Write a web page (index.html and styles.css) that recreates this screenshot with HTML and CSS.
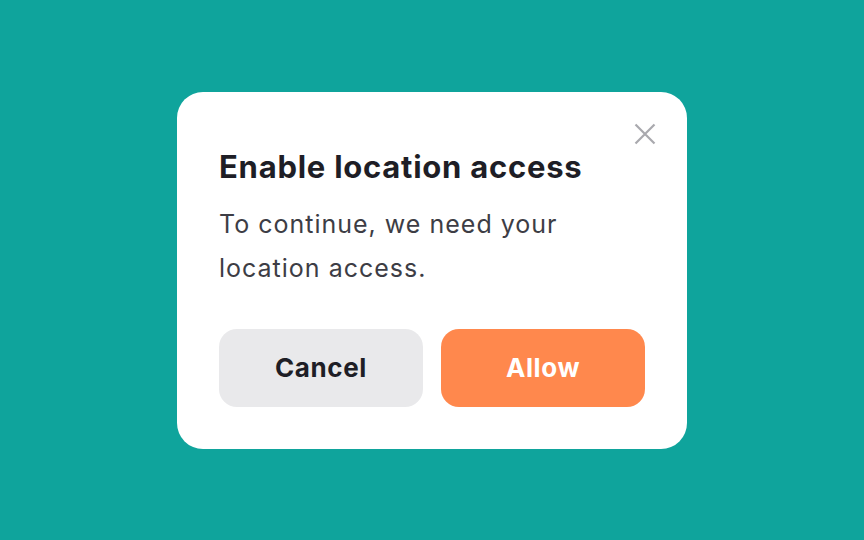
FILE: index.html
```html
<!DOCTYPE html>
<html lang="en">
<head>
  <meta charset="UTF-8">
  <meta name="viewport" content="width=device-width, initial-scale=1">
  <title>Enable location access</title>
  <link rel="stylesheet" href="styles.css">
</head>
<body>

  <div class="dialog">
    <button class="close" aria-label="Close">
      <svg width="22" height="22" viewBox="0 0 22 22">
        <path d="M1.5 1.5L20.5 20.5M20.5 1.5L1.5 20.5" stroke="#a9a9ae" stroke-width="2.2" fill="none"/>
      </svg>
    </button>
    <h2>Enable location access</h2>
    <p>To continue, we need your location access.</p>
    <div class="actions">
      <button class="btn cancel">Cancel</button>
      <button class="btn allow">Allow</button>
    </div>
  </div>

</body>
</html>
```

FILE: styles.css
```css
body {
  font-family: Inter, "Noto Sans", sans-serif;
  margin: 0;
  height: 540px;
  background: #0fa49c;
  display: flex;
  align-items: center;
  justify-content: center;
}

.dialog {
  position: relative;
  width: 426px;
  padding: 56px 42px 42px;
  background: #fff;
  border-radius: 26px;
}

.close {
  position: absolute;
  top: 31px;
  right: 31px;
  padding: 0;
  border: 0;
  background: none;
  width: 22px;
  height: 22px;
}

.close svg {
  display: block;
}

h2 {
  margin: 0;
  font-size: 31px;
  line-height: 38px;
  font-weight: 700;
  letter-spacing: 0.75px;
  color: #1e1e26;
}

p {
  margin: 16px 0 0;
  font-size: 25px;
  line-height: 44px;
  letter-spacing: 1px;
  color: #3d3d45;
}

.actions {
  display: flex;
  gap: 18px;
  margin-top: 39px;
}

.btn {
  flex: 1;
  height: 78px;
  border: 0;
  border-radius: 18px;
  font-family: inherit;
  font-size: 26px;
  font-weight: 700;
  letter-spacing: 0.6px;
}

.cancel {
  background: #e9e9eb;
  color: #1e1e26;
}

.allow {
  background: #ff884d;
  color: #fff;
}
```
